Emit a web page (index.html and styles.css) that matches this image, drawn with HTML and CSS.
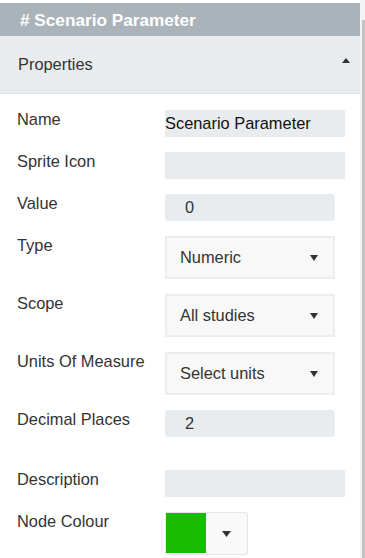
FILE: index.html
```html
<!DOCTYPE html>
<html lang="en">
<head>
    <meta charset="UTF-8">
    <meta name="viewport" content="width=device-width, initial-scale=1.0">
    <title>Scenario Parameter</title>
    <link rel="stylesheet" href="styles.css">
</head>
<body>
    <div class="panel">
        <div class="title"># Scenario Parameter</div>

        <div class="section-head">
            <span>Properties</span>
            <svg class="caret-up" width="8" height="5" viewBox="0 0 8 5"><path d="M0 5L4 0L8 5Z" fill="#333"/></svg>
        </div>

        <div class="form">
            <div class="row">
                <label>Name</label>
                <div class="input input-plain">Scenario Parameter</div>
            </div>
            <div class="row">
                <label>Sprite Icon</label>
                <div class="input"></div>
            </div>
            <div class="row">
                <label>Value</label>
                <div class="input input-short">0</div>
            </div>
            <div class="row">
                <label>Type</label>
                <div class="select">
                    <span>Numeric</span>
                    <svg width="8" height="6" viewBox="0 0 8 6"><path d="M0 0L8 0L4 6Z" fill="#333"/></svg>
                </div>
            </div>
            <div class="row">
                <label>Scope</label>
                <div class="select">
                    <span>All studies</span>
                    <svg width="8" height="6" viewBox="0 0 8 6"><path d="M0 0L8 0L4 6Z" fill="#333"/></svg>
                </div>
            </div>
            <div class="row">
                <label>Units Of Measure</label>
                <div class="select">
                    <span>Select units</span>
                    <svg width="8" height="6" viewBox="0 0 8 6"><path d="M0 0L8 0L4 6Z" fill="#333"/></svg>
                </div>
            </div>
            <div class="row">
                <label>Decimal Places</label>
                <div class="input input-short">2</div>
            </div>
            <div class="row row-spaced">
                <label>Description</label>
                <div class="input"></div>
            </div>
            <div class="row">
                <label>Node Colour</label>
                <div class="colour-picker">
                    <div class="swatch"></div>
                    <svg width="9" height="6" viewBox="0 0 9 6"><path d="M0 0L9 0L4.5 6Z" fill="#333"/></svg>
                </div>
            </div>
        </div>
    </div>

    <div class="scrollbar">
        <div class="thumb"></div>
    </div>
</body>
</html>
```

FILE: styles.css
```css
html, body {
    height: 100%;
}
body {
    margin: 0;
    display: flex;
    overflow: hidden;
    font-family: "Liberation Sans", Arial, sans-serif;
    font-size: 16.4px;
    color: #333;
    background-color: white;
}
.panel {
    width: 360px;
    padding-top: 3px;
}
.title {
    height: 33px;
    padding-left: 20px;
    display: flex;
    align-items: center;
    padding-top: 1px;
    box-sizing: border-box;
    background-color: #abb3ba;
    color: white;
    font-size: 17.2px;
    font-weight: bold;
}
.section-head {
    height: 58px;
    padding: 0 10px 0 18px;
    display: flex;
    align-items: center;
    justify-content: space-between;
    box-sizing: border-box;
    background-color: #e9ecef;
    border-bottom: 1px solid #e0e3e6;
}
.caret-up {
    margin-top: -8px;
}
/* Form rows */
.form {
    padding: 16px 15px 0 17px;
    display: flex;
    flex-direction: column;
    gap: 15px;
}
.row {
    display: grid;
    grid-template-columns: 148px 1fr;
    align-items: start;
}
.row label {
    line-height: 18px;
    white-space: nowrap;
}
.row-spaced {
    margin-top: 18px;
}
.input {
    height: 27px;
    width: 180px;
    display: flex;
    align-items: center;
    background-color: #e9ecef;
    color: #111;
}
.input-short {
    width: 170px;
    padding-left: 20px;
    box-sizing: border-box;
    border-radius: 3px;
    color: #333;
}
.select {
    width: 170px;
    height: 43px;
    padding: 0 15px 0 13px;
    display: flex;
    align-items: center;
    justify-content: space-between;
    box-sizing: border-box;
    border: 2px solid #ededed;
    background-color: #f8f8f8;
}
.colour-picker {
    width: 83px;
    height: 43px;
    padding: 1px;
    display: flex;
    align-items: center;
    box-sizing: border-box;
    border: 1px solid #e6e6e6;
    border-radius: 2px;
    background-color: #f9f9f9;
}
.swatch {
    width: 40px;
    height: 40px;
    margin: -1px 16px 0 -1px;
    background-color: #1bbc00;
}
.scrollbar {
    width: 5px;
    padding: 20px 0 0 2px;
    box-sizing: border-box;
    background-color: #f3f3f3;
}
.thumb {
    height: 100%;
    background-color: #c3c3c3;
}
```
